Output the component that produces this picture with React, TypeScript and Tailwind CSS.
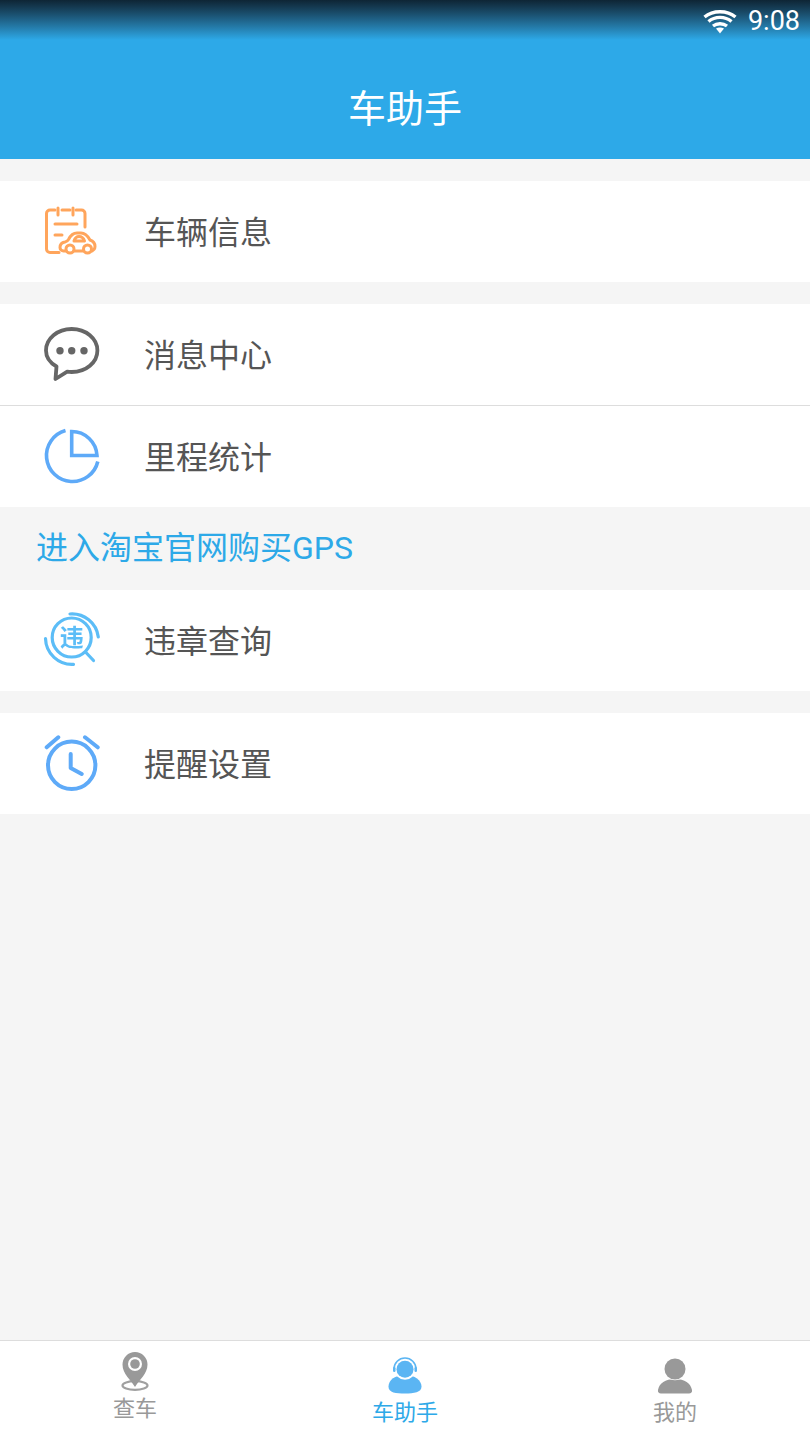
const cjk = "font-['Roboto','Noto_Sans_CJK_SC',sans-serif]";

function CarInfoIcon() {
  return (
    <svg viewBox="0 0 80 101" className="h-[101px] w-[80px] blur-[0.5px]" fill="none" stroke="#ffa55c" strokeWidth="3" strokeLinecap="round" strokeLinejoin="round">
      <path d="M25 29h-5a3.500 3.500 0 0 0-3.500 3.500V68a3.500 3.500 0 0 0 3.500 3.500h9" />
      <path d="M32 29h8M46 29h5.500a3.500 3.500 0 0 1 3.500 3.500V46" />
      <path d="M28 27v7M43 27v7" />
      <path d="M25 43h22M25 54h7" />
      <path d="M36 70h-2.500c-2 0-3.500-1.500-3.500-3.500 0-3 2-5 5-5.500 1.500-.3 2.500-.8 3.500-2.500 2-4 4.500-6.500 8.500-6.500h4c4 0 6.500 2.500 9 7 3 1 5 3 5 6.500 0 2-1.500 4.500-3.500 4.500H62M44 70h9" />
      <path d="M44 60c1-3 2.500-4.500 5-4.500s4.500 1.500 5.500 4.500z" />
      <circle cx="40" cy="68" r="4" />
      <circle cx="57.500" cy="68" r="4" />
    </svg>
  );
}

function MessageIcon() {
  return (
    <svg viewBox="0 0 80 101" className="h-[101px] w-[80px] blur-[0.5px]" fill="none" stroke="#666666" strokeWidth="3.800" strokeLinejoin="round">
      <path d="M26.500 62.500C19.500 58.500 16 52.500 16 46.500 16 34.500 27.500 25 41.700 25s25.700 9.500 25.700 21.500S56 68 41.700 68c-1.500 0-3-.1-4.500-.3L25.500 75z" />
      <circle cx="30" cy="46.700" r="3.700" fill="#666666" stroke="none" />
      <circle cx="41.700" cy="46.700" r="3.700" fill="#666666" stroke="none" />
      <circle cx="54" cy="46.700" r="3.700" fill="#666666" stroke="none" />
    </svg>
  );
}

function PieIcon() {
  return (
    <svg viewBox="0 0 80 101" className="h-[101px] w-[80px] blur-[0.5px]" fill="none" stroke="#5eaaf8" strokeWidth="3.600">
      <path d="M35.500 24.500A26 26 0 1 0 67.800 55.500" />
      <path d="M41.700 25.500V49.500H67A25.300 25.300 0 0 0 41.700 25.500Z" />
    </svg>
  );
}

function ViolationIcon() {
  return (
    <svg viewBox="0 0 80 101" className="h-[101px] w-[80px] blur-[0.5px]" fill="none" stroke="#5cbdf7" strokeWidth="3.200" strokeLinecap="round">
      <circle cx="41.700" cy="47.500" r="19.500" />
      <path d="M40 24A26.500 26.500 0 0 1 68.300 47" />
      <path d="M15.500 48.500A26.500 26.500 0 0 0 43.500 74.300" />
      <path d="M55.500 62l8 8.500" />
      <text x="41.700" y="56" textAnchor="middle" fill="#5cbdf7" stroke="none" fontSize="24" fontWeight="700" fontFamily="'Noto Sans CJK SC',sans-serif">违</text>
    </svg>
  );
}

function AlarmIcon() {
  return (
    <svg viewBox="0 0 80 101" className="h-[101px] w-[80px] blur-[0.5px]" fill="none" stroke="#5eaaf8" strokeWidth="4" strokeLinecap="round" strokeLinejoin="round">
      <circle cx="41.700" cy="52.300" r="23.700" />
      <path d="M40.700 41v14l11 6" />
      <path d="M16.700 34.300l11.600-10M55 24.300l12.700 10" />
    </svg>
  );
}

function PinIcon() {
  return (
    <svg viewBox="0 0 60 44" className="h-[44px] w-[60px]">
      <ellipse cx="30" cy="35.500" rx="12.500" ry="4.300" fill="none" stroke="#a0a0a0" strokeWidth="2.200" />
      <path d="M30 37C26 30 17.500 24 17.500 14.500a12.500 12.500 0 0 1 25 0C42.500 24 34 30 30 37z" fill="#999999" />
      <circle cx="30" cy="14" r="7" fill="#ffffff" />
      <circle cx="30" cy="14" r="4.800" fill="#999999" />
    </svg>
  );
}

function AssistantIcon() {
  return (
    <svg viewBox="0 0 60 44" className="h-[44px] w-[60px]">
      <path d="M30 21c-10 0-16.500 5-16.500 11.500S21 39.500 30 39.500s16.500-1 16.500-7S40 21 30 21z" fill="#5bb5f3" />
      <circle cx="30" cy="15.300" r="10.500" fill="#ffffff" />
      <circle cx="30" cy="15.300" r="8.500" fill="#5bb5f3" />
      <path d="M19 15a11 11 0 0 1 22 0" fill="none" stroke="#5bb5f3" strokeWidth="1.600" />
      <rect x="18" y="13" width="2.500" height="5" rx="1.200" fill="#5bb5f3" />
      <rect x="39.500" y="13" width="2.500" height="5" rx="1.200" fill="#5bb5f3" />
    </svg>
  );
}

function UserIcon() {
  return (
    <svg viewBox="0 0 60 44" className="h-[44px] w-[60px]">
      <path d="M16 39.500c-2 0-3.500-1.500-3-3.500 1.500-7 7-11 17-11s15.500 4 17 11c.5 2-1 3.500-3 3.500z" fill="#999999" />
      <circle cx="30" cy="15" r="11.300" fill="#ffffff" />
      <circle cx="30" cy="15" r="10.500" fill="#999999" />
    </svg>
  );
}

function WifiIcon() {
  return (
    <svg viewBox="0 0 34 25" className="h-[25px] w-[34px]" fill="none" stroke="#ffffff" strokeWidth="3.400">
      <path d="M1.500 8C10 1 24 1 32.500 8" />
      <path d="M5.500 12.500C12 7 22 7 28.500 12.500" />
      <path d="M10 17C14 14 20 14 24 17" />
      <path d="M13 19.500C15.500 18 18.500 18 21 19.500L17 24.500z" fill="#ffffff" stroke="none" />
    </svg>
  );
}

function Row({ icon, label, border }: { icon: React.ReactNode; label: string; border?: boolean }) {
  return (
    <div className={border ? 'flex h-[102px] items-center border-b border-[#dddddd] bg-white pl-[30px]' : 'flex h-[101px] items-center bg-white pl-[30px]'}>
      {icon}
      <span className="ml-[34px] pt-[2px] text-[32px] leading-none text-[#555555]">{label}</span>
    </div>
  );
}

function Gap() {
  return <div className="h-[22px]" />;
}

export default function App() {
  return (
    <div className={`flex h-[1440px] w-[810px] flex-col overflow-hidden bg-[#f5f5f5] ${cjk}`}>
      <header className="flex h-[159px] flex-col bg-[#2da9e8]">
        <div className="flex h-[40px] items-center justify-end bg-gradient-to-b from-[#0e2535] to-[#2da9e8] pt-[3px] pr-[10px]">
          <WifiIcon />
          <span className="ml-[11px] font-['Roboto'] text-[27px] leading-none text-white">9:08</span>
        </div>
        <div className="flex flex-1 items-center justify-center pt-[19px] text-[38px] leading-none text-white">车助手</div>
      </header>

      <Gap />
      <Row icon={<CarInfoIcon />} label="车辆信息" />
      <Gap />
      <Row icon={<MessageIcon />} label="消息中心" border />
      <Row icon={<PieIcon />} label="里程统计" />
      <div className="flex h-[83px] items-center pb-[2px] pl-[36px] text-[32px] leading-none text-[#2da9e8]">进入淘宝官网购买GPS</div>
      <Row icon={<ViolationIcon />} label="违章查询" />
      <Gap />
      <Row icon={<AlarmIcon />} label="提醒设置" />

      <nav className="mt-auto flex h-[100px] border-t border-[#dddddd] bg-white text-[22px] leading-[30px]">
        <div className="flex flex-1 flex-col items-center pt-[9px] text-[#999999]">
          <PinIcon />
          <span>查车</span>
        </div>
        <div className="flex flex-1 flex-col items-center pt-[13px] text-[#2da9e8]">
          <AssistantIcon />
          <span>车助手</span>
        </div>
        <div className="flex flex-1 flex-col items-center pt-[13px] text-[#999999]">
          <UserIcon />
          <span>我的</span>
        </div>
      </nav>
    </div>
  );
}
